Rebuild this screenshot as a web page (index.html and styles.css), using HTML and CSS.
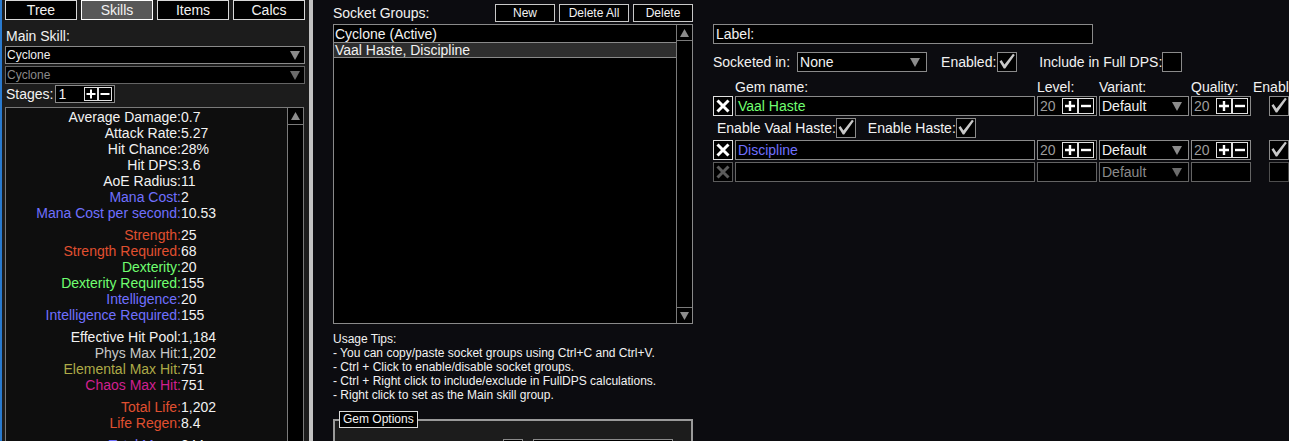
FILE: index.html
```html
<!DOCTYPE html>
<html lang="en">
<head>
    <meta charset="UTF-8">
    <title>Skills</title>
    <link rel="stylesheet" href="styles.css">
</head>
<body>
<div class="app">
    <aside class="side">
        <nav class="tabs">
            <button class="tab">Tree</button>
            <button class="tab active">Skills</button>
            <button class="tab">Items</button>
            <button class="tab">Calcs</button>
        </nav>

        <div class="side-label">Main Skill:</div>
        <div class="select sm">
            <span>Cyclone</span>
            <svg width="10" height="9" viewBox="0 0 10 9"><path d="M0 0H10L5 9Z" fill="#8c8c8c"/></svg>
        </div>
        <div class="select sm off">
            <span>Cyclone</span>
            <svg width="10" height="9" viewBox="0 0 10 9"><path d="M0 0H10L5 9Z" fill="#6c6c6c"/></svg>
        </div>

        <div class="stages">
            <span>Stages:</span>
            <div class="spin sm">
                <span class="val">1</span>
                <span class="pm"><svg width="12" height="12" viewBox="0 0 12 12"><path d="M1.5 6H10.5M6 1.5V10.5" stroke="#fff" stroke-width="2"/></svg></span>
                <span class="pm"><svg width="12" height="12" viewBox="0 0 12 12"><path d="M1.5 6H10.5" stroke="#fff" stroke-width="2"/></svg></span>
            </div>
        </div>

        <div class="stats">
            <div class="stat-list">
                <div class="stat-group">
                    <div class="stat"><span class="k">Average Damage:</span><span class="v">0.7</span></div>
                    <div class="stat"><span class="k">Attack Rate:</span><span class="v">5.27</span></div>
                    <div class="stat"><span class="k">Hit Chance:</span><span class="v">28%</span></div>
                    <div class="stat"><span class="k">Hit DPS:</span><span class="v">3.6</span></div>
                    <div class="stat"><span class="k">AoE Radius:</span><span class="v">11</span></div>
                    <div class="stat"><span class="k mana">Mana Cost:</span><span class="v">2</span></div>
                    <div class="stat"><span class="k mana">Mana Cost per second:</span><span class="v">10.53</span></div>
                </div>
                <div class="stat-group">
                    <div class="stat"><span class="k str">Strength:</span><span class="v">25</span></div>
                    <div class="stat"><span class="k str">Strength Required:</span><span class="v">68</span></div>
                    <div class="stat"><span class="k dex">Dexterity:</span><span class="v">20</span></div>
                    <div class="stat"><span class="k dex">Dexterity Required:</span><span class="v">155</span></div>
                    <div class="stat"><span class="k int">Intelligence:</span><span class="v">20</span></div>
                    <div class="stat"><span class="k int">Intelligence Required:</span><span class="v">155</span></div>
                </div>
                <div class="stat-group">
                    <div class="stat"><span class="k">Effective Hit Pool:</span><span class="v">1,184</span></div>
                    <div class="stat"><span class="k phys">Phys Max Hit:</span><span class="v">1,202</span></div>
                    <div class="stat"><span class="k elem">Elemental Max Hit:</span><span class="v">751</span></div>
                    <div class="stat"><span class="k chaos">Chaos Max Hit:</span><span class="v">751</span></div>
                </div>
                <div class="stat-group">
                    <div class="stat"><span class="k str">Total Life:</span><span class="v">1,202</span></div>
                    <div class="stat"><span class="k str">Life Regen:</span><span class="v">8.4</span></div>
                </div>
                <div class="stat-group">
                    <div class="stat"><span class="k mana">Total Mana:</span><span class="v">344</span></div>
                </div>
            </div>
            <div class="sbar">
                <div class="sbtn"><svg width="9" height="8" viewBox="0 0 9 8"><path d="M4.5 0L9 8H0Z" fill="#8c8c8c"/></svg></div>
            </div>
        </div>
    </aside>

    <div class="divider"></div>

    <main class="groups">
        <div class="groups-head">
            <span class="title">Socket Groups:</span>
            <button class="btn w60">New</button>
            <button class="btn w70">Delete All</button>
            <button class="btn w60">Delete</button>
        </div>

        <div class="glist">
            <div class="glist-rows">
                <div class="grow">Cyclone (Active)</div>
                <div class="grow sel">Vaal Haste, Discipline</div>
            </div>
            <div class="sbar">
                <div class="sbtn"><svg width="9" height="8" viewBox="0 0 9 8"><path d="M4.5 0L9 8H0Z" fill="#8c8c8c"/></svg></div>
                <div class="sbtn bottom"><svg width="9" height="8" viewBox="0 0 9 8"><path d="M0 0H9L4.5 8Z" fill="#8c8c8c"/></svg></div>
            </div>
        </div>

        <div class="tips">
            <div>Usage Tips:</div>
            <div>- You can copy/paste socket groups using Ctrl+C and Ctrl+V.</div>
            <div>- Ctrl + Click to enable/disable socket groups.</div>
            <div>- Ctrl + Right click to include/exclude in FullDPS calculations.</div>
            <div>- Right click to set as the Main skill group.</div>
        </div>

        <fieldset class="gem-opts">
            <legend>Gem Options</legend>
            <div class="opt-row">
                <span class="check"></span>
                <div class="select opt-select"></div>
            </div>
        </fieldset>
    </main>

    <section class="gems">
        <div class="text-box label-box">Label:</div>

        <div class="sock-row">
            <span>Socketed in:</span>
            <div class="select sock-select">
                <span>None</span>
                <svg width="10" height="9" viewBox="0 0 10 9"><path d="M0 0H10L5 9Z" fill="#8c8c8c"/></svg>
            </div>
            <span class="lbl-enabled">Enabled:</span>
            <span class="check"><svg width="18" height="18" viewBox="0 0 18 18"><path d="M1.5 8.5L3.5 7L6.5 11.5L15 0.8L16.8 2L7.2 15.5H5.8Z" fill="#c8c8c8"/></svg></span>
            <span class="lbl-full">Include in Full DPS:</span>
            <span class="check"></span>
        </div>

        <div class="gem-head">
            <span class="c2">Gem name:</span>
            <span>Level:</span>
            <span>Variant:</span>
            <span>Quality:</span>
            <span>Enabled:</span>
        </div>

        <div class="gem-grid">
            <span class="xbtn"><svg width="18" height="18" viewBox="0 0 18 18"><path d="M3.5 3.5L14.5 14.5M14.5 3.5L3.5 14.5" stroke="#fff" stroke-width="3"/></svg></span>
            <div class="text-box dex">Vaal Haste</div>
            <div class="spin">
                <span class="val">20</span>
                <span class="pm"><svg width="14" height="14" viewBox="0 0 14 14"><path d="M2 7H12M7 2V12" stroke="#fff" stroke-width="2.4"/></svg></span>
                <span class="pm"><svg width="14" height="14" viewBox="0 0 14 14"><path d="M2 7H12" stroke="#fff" stroke-width="2.4"/></svg></span>
            </div>
            <div class="select">
                <span>Default</span>
                <svg width="10" height="9" viewBox="0 0 10 9"><path d="M0 0H10L5 9Z" fill="#8c8c8c"/></svg>
            </div>
            <div class="spin">
                <span class="val">20</span>
                <span class="pm"><svg width="14" height="14" viewBox="0 0 14 14"><path d="M2 7H12M7 2V12" stroke="#fff" stroke-width="2.4"/></svg></span>
                <span class="pm"><svg width="14" height="14" viewBox="0 0 14 14"><path d="M2 7H12" stroke="#fff" stroke-width="2.4"/></svg></span>
            </div>
            <div class="cell-check"><span class="check"><svg width="18" height="18" viewBox="0 0 18 18"><path d="M1.5 8.5L3.5 7L6.5 11.5L15 0.8L16.8 2L7.2 15.5H5.8Z" fill="#c8c8c8"/></svg></span></div>

            <div class="enable-row">
                <span>Enable Vaal Haste:</span>
                <span class="check"><svg width="18" height="18" viewBox="0 0 18 18"><path d="M1.5 8.5L3.5 7L6.5 11.5L15 0.8L16.8 2L7.2 15.5H5.8Z" fill="#c8c8c8"/></svg></span>
                <span class="lbl-haste">Enable Haste:</span>
                <span class="check"><svg width="18" height="18" viewBox="0 0 18 18"><path d="M1.5 8.5L3.5 7L6.5 11.5L15 0.8L16.8 2L7.2 15.5H5.8Z" fill="#c8c8c8"/></svg></span>
            </div>

            <span class="xbtn"><svg width="18" height="18" viewBox="0 0 18 18"><path d="M3.5 3.5L14.5 14.5M14.5 3.5L3.5 14.5" stroke="#fff" stroke-width="3"/></svg></span>
            <div class="text-box int">Discipline</div>
            <div class="spin">
                <span class="val">20</span>
                <span class="pm"><svg width="14" height="14" viewBox="0 0 14 14"><path d="M2 7H12M7 2V12" stroke="#fff" stroke-width="2.4"/></svg></span>
                <span class="pm"><svg width="14" height="14" viewBox="0 0 14 14"><path d="M2 7H12" stroke="#fff" stroke-width="2.4"/></svg></span>
            </div>
            <div class="select">
                <span>Default</span>
                <svg width="10" height="9" viewBox="0 0 10 9"><path d="M0 0H10L5 9Z" fill="#8c8c8c"/></svg>
            </div>
            <div class="spin">
                <span class="val">20</span>
                <span class="pm"><svg width="14" height="14" viewBox="0 0 14 14"><path d="M2 7H12M7 2V12" stroke="#fff" stroke-width="2.4"/></svg></span>
                <span class="pm"><svg width="14" height="14" viewBox="0 0 14 14"><path d="M2 7H12" stroke="#fff" stroke-width="2.4"/></svg></span>
            </div>
            <div class="cell-check"><span class="check"><svg width="18" height="18" viewBox="0 0 18 18"><path d="M1.5 8.5L3.5 7L6.5 11.5L15 0.8L16.8 2L7.2 15.5H5.8Z" fill="#c8c8c8"/></svg></span></div>

            <span class="xbtn off"><svg width="18" height="18" viewBox="0 0 18 18"><path d="M3.5 3.5L14.5 14.5M14.5 3.5L3.5 14.5" stroke="#5c5c5c" stroke-width="3"/></svg></span>
            <div class="text-box off"></div>
            <div class="spin off"></div>
            <div class="select off">
                <span>Default</span>
                <svg width="10" height="9" viewBox="0 0 10 9"><path d="M0 0H10L5 9Z" fill="#6c6c6c"/></svg>
            </div>
            <div class="spin off"></div>
            <div class="cell-check"><span class="check off"></span></div>
        </div>
    </section>
</div>
</body>
</html>
```

FILE: styles.css
```css
* {
    box-sizing: border-box;
}

body {
    margin: 0;
    width: 1289px;
    height: 441px;
    overflow: hidden;
    background: #0c0c10;
    color: #f2f2f2;
    font-family: 'Liberation Sans', Arial, sans-serif;
    font-size: 14px;
}

.app {
    display: flex;
    height: 441px;
}

/* ---------- left side panel ---------- */

.side {
    width: 309px;
    flex: none;
    background: #1c1c1c;
    border-left: 2px solid #2a7bd0;
    padding: 0 4px 0 3px;
    overflow: hidden;
}

.tabs {
    display: flex;
    gap: 4px;
}

.tab {
    width: 72px;
    height: 20px;
    padding: 0;
    border: 1px solid #d8d8d8;
    background: #000;
    color: #f2f2f2;
    font-family: inherit;
    font-size: 14px;
    line-height: 18px;
}

.tab.active {
    background: #585858;
    border-color: #fff;
}

.side-label {
    margin-top: 8px;
    padding-left: 1px;
    line-height: 16px;
}

.select {
    display: flex;
    align-items: center;
    justify-content: space-between;
    height: 20px;
    padding: 0 6px 0 2px;
    border: 1px solid #8a8a8a;
    background: #000;
    line-height: 18px;
}

.select.sm {
    height: 18px;
    margin-top: 2px;
    padding-left: 1px;
    padding-right: 4px;
    font-size: 12px;
    line-height: 16px;
}

.select.off {
    border-color: #646464;
    color: #8a8a8a;
}

.stages {
    display: flex;
    align-items: center;
    gap: 2px;
    margin-top: 1px;
    padding-left: 1px;
    height: 18px;
}

.spin {
    display: flex;
    align-items: center;
    padding: 0 2px;
    border: 1px solid #8a8a8a;
    background: #000;
    color: #9c9c9c;
    line-height: 18px;
}

.spin .val {
    flex: 1;
}

.spin.off {
    border-color: #646464;
}

.pm {
    width: 16px;
    height: 16px;
    display: flex;
    align-items: center;
    justify-content: center;
    border: 1px solid #e0e0e0;
    background: #000;
}

.spin.sm {
    width: 60px;
    height: 18px;
    color: #f2f2f2;
    padding-right: 2px;
    line-height: 16px;
}

.spin.sm .pm {
    width: 14px;
    height: 14px;
}

.stats {
    display: flex;
    width: 299px;
    height: 420px;
    margin-top: 4px;
    border: 1px solid #7a7a7a;
    background: #0e0e0e;
}

.stat-list {
    flex: 1;
    padding-top: 1px;
}

.stat-group + .stat-group {
    margin-top: 6px;
}

.stat {
    display: flex;
    line-height: 16px;
    white-space: nowrap;
}

.stat .k {
    width: 175px;
    text-align: right;
}

.k.mana, .k.int { color: #7070ff; }
.k.str { color: #e05030; }
.k.dex { color: #70ff70; }
.k.phys { color: #c8c8c8; }
.k.elem { color: #adaa47; }
.k.chaos { color: #d02090; }

.sbar {
    display: flex;
    flex-direction: column;
    width: 16px;
    border-left: 1px solid #7a7a7a;
    background: #000;
}

.sbtn {
    height: 17px;
    display: flex;
    align-items: center;
    justify-content: center;
    border-bottom: 1px solid #7a7a7a;
}

.sbtn.bottom {
    margin-top: auto;
    border-top: 1px solid #7a7a7a;
    border-bottom: none;
}

.divider {
    width: 4px;
    flex: none;
    background: #c2c2c2;
}

/* ---------- socket groups ---------- */

.groups {
    width: 400px;
    flex: none;
    padding: 4px 20px 0;
}

.groups-head {
    display: flex;
    align-items: center;
    gap: 4px;
    height: 18px;
}

.groups-head .title {
    flex: 1;
    line-height: 16px;
}

.btn {
    height: 18px;
    padding: 0;
    border: 1px solid #c8c8c8;
    background: #000;
    color: #f2f2f2;
    font-family: inherit;
    font-size: 12px;
}

.w60 { width: 60px; }
.w70 { width: 70px; }

.glist {
    display: flex;
    height: 300px;
    margin-top: 2px;
    border: 1px solid #8a8a8a;
    background: #000;
}

.glist-rows {
    flex: 1;
    padding-top: 1px;
}

.grow {
    height: 16px;
    padding-left: 1px;
    line-height: 16px;
}

.grow.sel {
    background: #2e2e2e;
    border-top: 1px solid #8a8a8a;
    border-bottom: 1px solid #8a8a8a;
    line-height: 14px;
}

.glist .sbtn {
    height: 16px;
}

.tips {
    margin-top: 8px;
    font-size: 12px;
    line-height: 14px;
}

.gem-opts {
    margin: 9px 0 0;
    padding: 0 4px 10px;
    border: 2px solid #9a9a9a;
    background: #1c1c1c;
}

.gem-opts legend {
    padding: 0 3px;
    border: 1px solid #dcdcdc;
    background: #000;
    font-size: 12px;
    line-height: 15px;
}

.opt-row {
    display: flex;
    align-items: center;
    height: 20px;
    margin-top: 11px;
    padding-left: 164px;
}

.opt-select {
    width: 140px;
    margin-left: 10px;
}

/* ---------- gem list ---------- */

.gems {
    flex: 1;
    padding-top: 24px;
}

.text-box {
    height: 20px;
    padding-left: 2px;
    border: 1px solid #8a8a8a;
    background: #000;
    line-height: 18px;
}

.text-box.off {
    border-color: #646464;
}

.label-box {
    width: 380px;
}

.dex { color: #70ff70; }
.int { color: #7070ff; }

.sock-row {
    display: flex;
    align-items: center;
    height: 20px;
    margin-top: 8px;
}

.sock-select {
    width: 130px;
    margin-left: 7px;
}

.lbl-enabled {
    margin-left: 14px;
    margin-right: 1px;
}

.lbl-full {
    margin-left: 22px;
}

.check {
    width: 20px;
    height: 20px;
    flex: none;
    display: flex;
    align-items: center;
    justify-content: center;
    border: 1px solid #8a8a8a;
    background: #000;
}

.check.off {
    border-color: #4e4e4e;
}

.gem-head,
.gem-grid {
    display: grid;
    grid-template-columns: 20px 300px 60px 90px 60px 36px;
    column-gap: 2px;
}

.gem-head {
    margin-top: 7px;
    margin-bottom: 1px;
    line-height: 16px;
    white-space: nowrap;
}

.gem-head .c2 {
    grid-column: 2;
}

.gem-grid {
    grid-auto-rows: 20px;
    row-gap: 2px;
}

.xbtn {
    display: flex;
    align-items: center;
    justify-content: center;
    border: 1px solid #e0e0e0;
    background: #000;
}

.xbtn.off {
    border-color: #5c5c5c;
}

.cell-check {
    padding-left: 16px;
}

.enable-row {
    grid-column: 1 / -1;
    display: flex;
    align-items: center;
    padding-left: 4px;
}

.lbl-haste {
    margin-left: 12px;
}
```
